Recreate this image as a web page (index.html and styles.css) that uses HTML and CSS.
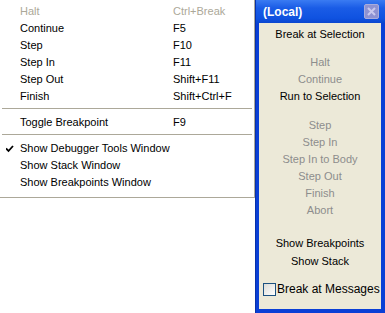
FILE: index.html
```html
<!DOCTYPE html>
<html lang="en">
<head>
    <meta charset="UTF-8">
    <title>Debugger</title>
    <link rel="stylesheet" href="styles.css">
</head>
<body>
    <div class="screen">
        <!-- debug menu -->
        <div class="menu">
            <div class="item disabled"><span class="check"></span><span class="label">Halt</span><span class="key">Ctrl+Break</span></div>
            <div class="item"><span class="check"></span><span class="label">Continue</span><span class="key">F5</span></div>
            <div class="item"><span class="check"></span><span class="label">Step</span><span class="key">F10</span></div>
            <div class="item"><span class="check"></span><span class="label">Step In</span><span class="key">F11</span></div>
            <div class="item"><span class="check"></span><span class="label">Step Out</span><span class="key">Shift+F11</span></div>
            <div class="item"><span class="check"></span><span class="label">Finish</span><span class="key">Shift+Ctrl+F</span></div>
            <div class="sep"></div>
            <div class="item"><span class="check"></span><span class="label">Toggle Breakpoint</span><span class="key">F9</span></div>
            <div class="sep"></div>
            <div class="item"><span class="check">
                <svg width="8" height="8" viewBox="0 0 8 8"><path d="M0 3.5 L2.5 6 L7 1" fill="none" stroke="#000" stroke-width="1.8"/></svg>
            </span><span class="label">Show Debugger Tools Window</span><span class="key"></span></div>
            <div class="item"><span class="check"></span><span class="label">Show Stack Window</span><span class="key"></span></div>
            <div class="item"><span class="check"></span><span class="label">Show Breakpoints Window</span><span class="key"></span></div>
        </div>

        <!-- debugger tools window -->
        <div class="window">
            <div class="titlebar">
                <span class="title">(Local)</span>
                <span class="close">
                    <svg width="9" height="9" viewBox="0 0 9 9"><path d="M1 1 L8 8 M8 1 L1 8" stroke="#c9c9ee" stroke-width="2"/></svg>
                </span>
            </div>
            <div class="panel">
                <div class="btn">Break at Selection</div>

                <div class="group g-run">
                    <div class="btn off">Halt</div>
                    <div class="btn off">Continue</div>
                    <div class="btn">Run to Selection</div>
                </div>

                <div class="group g-step">
                    <div class="btn off">Step</div>
                    <div class="btn off">Step In</div>
                    <div class="btn off">Step In to Body</div>
                    <div class="btn off">Step Out</div>
                    <div class="btn off">Finish</div>
                    <div class="btn off">Abort</div>
                </div>

                <div class="group g-show">
                    <div class="btn tall">Show Breakpoints</div>
                    <div class="btn tall">Show Stack</div>
                </div>

                <label class="checkrow">
                    <span class="box"></span>
                    <span>Break at Messages</span>
                </label>
            </div>
        </div>
    </div>
</body>
</html>
```

FILE: styles.css
```css
body {
    margin: 0;
    padding: 0;
    background: #fff;
    font-family: 'Liberation Sans', Arial, sans-serif;
    font-size: 11px;
    color: #000;
}
.screen {
    display: flex;
    width: 385px;
    height: 313px;
    overflow: hidden;
}

/* menu */
.menu {
    width: 255px;
    height: 198px;
    box-sizing: border-box;
    padding-top: 3px;
    background: #fff;
    border-right: 1px solid #aca899;
    border-bottom: 1px solid #aca899;
}
.item {
    display: flex;
    height: 17px;
    line-height: 17px;
}
.item.disabled {
    color: #aca899;
}
.check {
    width: 20px;
    display: flex;
    align-items: center;
    justify-content: center;
    padding-left: 0;
}
.check svg {
    margin-left: -1px;
}
.label {
    width: 153px;
}
.key {
    flex: 1;
}
.sep {
    height: 1px;
    margin: 3px 2px 5px 2px;
    background: #aca899;
}

/* window */
.window {
    width: 130px;
    height: 313px;
    box-sizing: border-box;
    display: flex;
    flex-direction: column;
    background: #0a3fd6;
    border-left: 1px solid #0831a8;
    padding: 0 4px 4px 3px;
}
.titlebar {
    height: 23px;
    margin: 0 -4px 0 -3px;
    padding: 0 6px 0 7px;
    display: flex;
    align-items: center;
    justify-content: space-between;
    background: linear-gradient(#3a7bf2, #1a5ce6 35%, #0f52e0 80%, #0a46cf);
}
.title {
    color: #fff;
    font-weight: bold;
    font-size: 12px;
}
.close {
    width: 15px;
    height: 15px;
    box-sizing: border-box;
    border: 1px solid #a8acdc;
    border-radius: 2px;
    background: #8e92d2;
    display: flex;
    align-items: center;
    justify-content: center;
}
.panel {
    flex: 1;
    background: #ece9d8;
    padding-top: 3px;
    text-align: center;
}
.btn {
    height: 17px;
    line-height: 17px;
}
.btn.tall {
    height: 18px;
    line-height: 18px;
}
.btn.off {
    color: #8d8d8d;
}
.g-run {
    margin-top: 11px;
}
.g-step {
    margin-top: 12px;
}
.g-show {
    margin-top: 15px;
}
.checkrow {
    display: flex;
    align-items: center;
    gap: 1px;
    height: 18px;
    margin-top: 10px;
    padding-left: 4px;
    font-size: 12px;
}
.box {
    width: 13px;
    height: 13px;
    box-sizing: border-box;
    border: 1px solid #1c5180;
    background: linear-gradient(135deg, #dcdcd7, #fff);
}
```
